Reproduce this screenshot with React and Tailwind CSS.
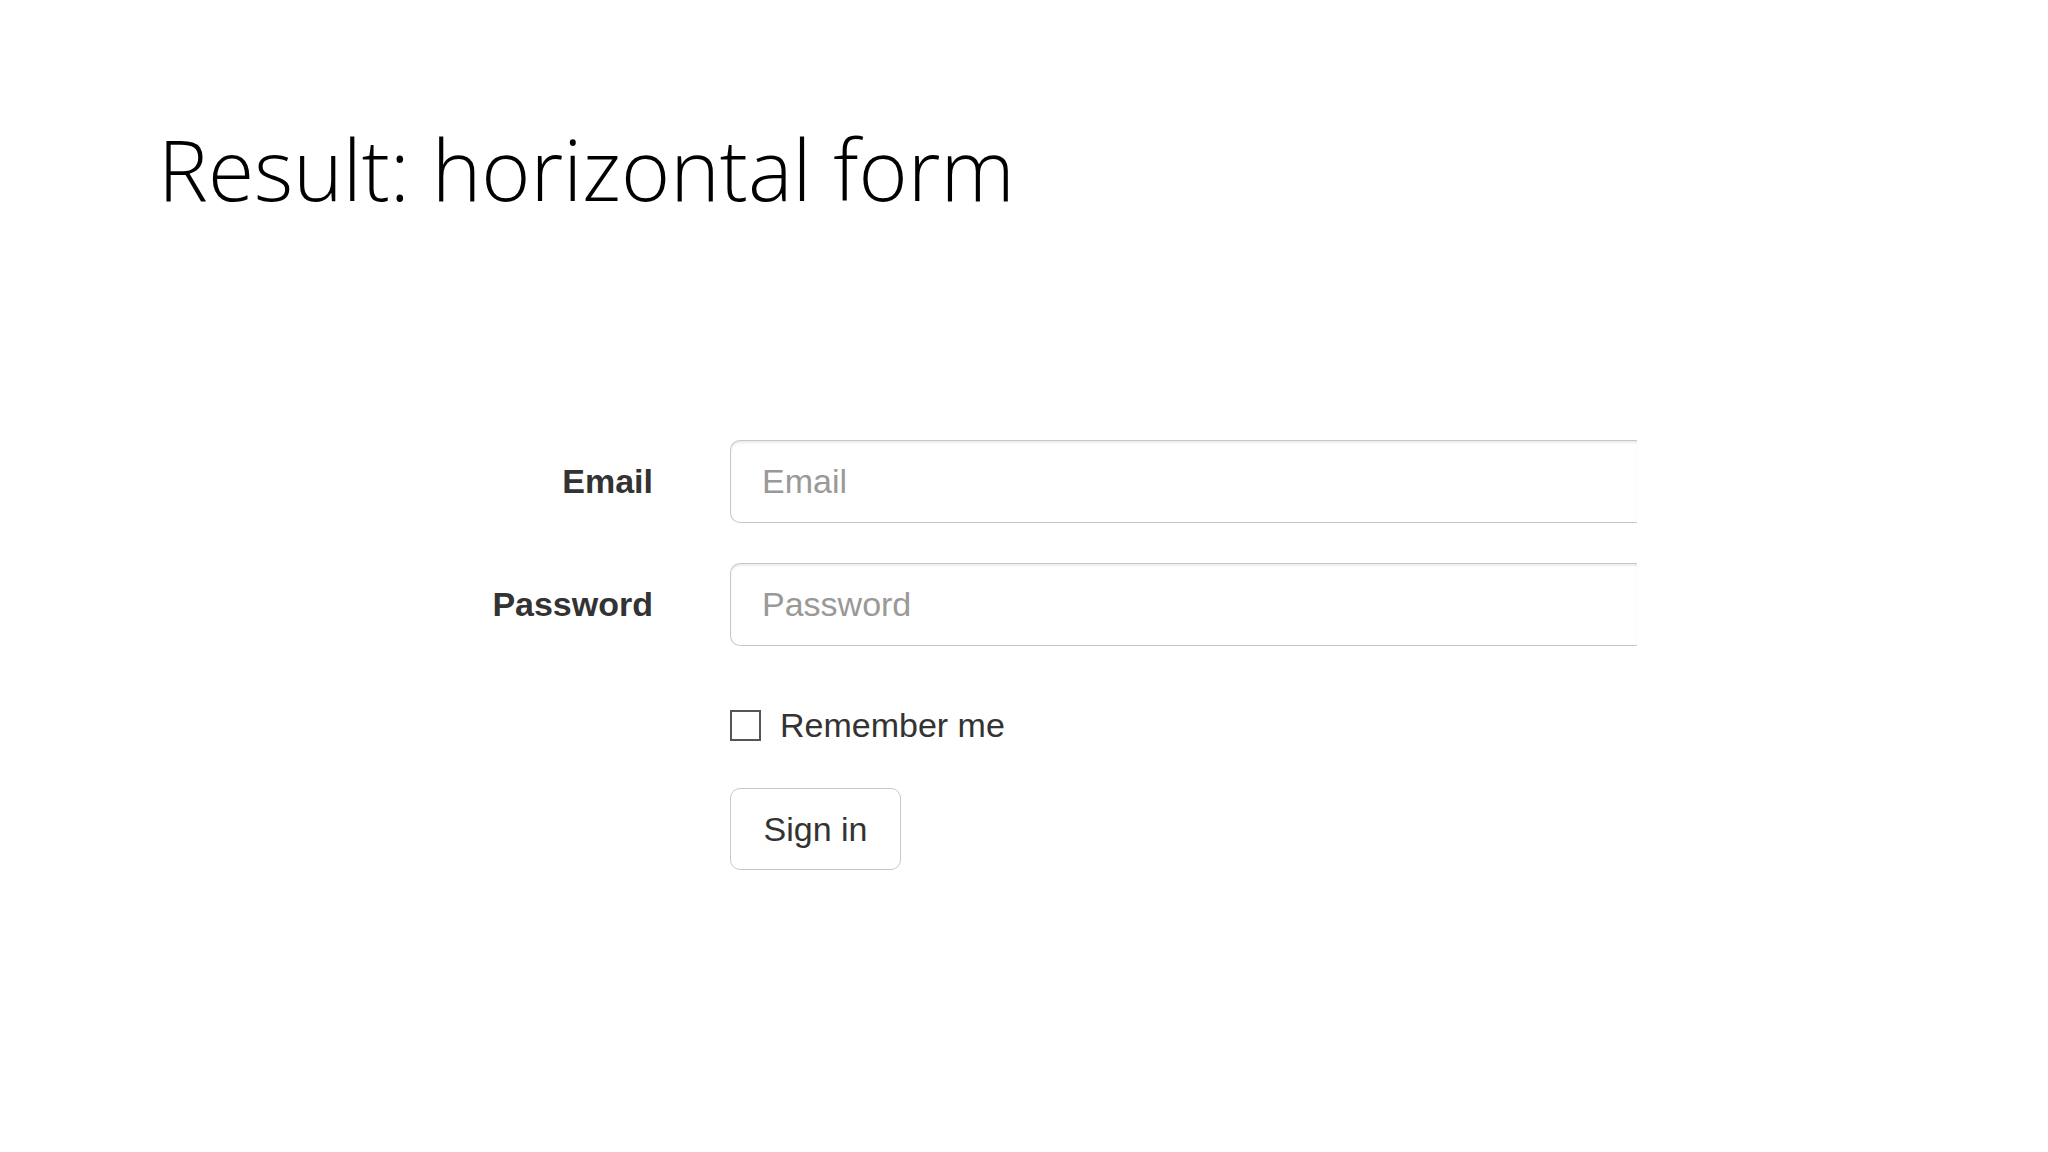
import React from "react";

const arial = { fontFamily: '"Liberation Sans", Arial, sans-serif' };

function Row({ label, placeholder, type }) {
  return (
    <div className="flex items-center">
      <label
        className="w-[200px] ml-[453px] text-right text-[34px] font-bold text-[#333]"
        style={arial}
      >
        {label}
      </label>
      <input
        type={type}
        placeholder={placeholder}
        className="ml-[77px] w-[907px] h-[83px] pl-[31px] text-[34px] text-[#555] placeholder:text-[#999]
                   border border-r-0 border-[#c8c8c8] rounded-l-[10px] outline-none bg-white
                   shadow-[inset_0_2px_2px_rgba(0,0,0,0.08)]"
        style={arial}
      />
    </div>
  );
}

export default function App() {
  return (
    <div className="w-[2048px] h-[1152px] bg-white overflow-hidden">
      <h1
        className="pt-[127px] pl-[158px] text-[84px] leading-none font-[350] text-black"
        style={{ fontFamily: '"Open Sans", sans-serif' }}
      >
        Result: horizontal form
      </h1>

      <form className="mt-[229px] flex flex-col gap-[40px]" onSubmit={(e) => e.preventDefault()}>
        <Row label="Email" placeholder="Email" type="email" />
        <Row label="Password" placeholder="Password" type="password" />
      </form>

      <div className="ml-[730px] mt-[59px] h-[40px] flex items-center gap-[19px]" style={arial}>
        <span className="w-[31px] h-[31px] border-2 border-[#555] bg-white" />
        <span className="text-[34px] text-[#333]">Remember me</span>
      </div>

      <button
        className="ml-[730px] mt-[43px] w-[171px] h-[82px] border border-[#c8c8c8] rounded-[10px] bg-white text-[34px] text-[#333]"
        style={arial}
      >
        Sign in
      </button>
    </div>
  );
}
